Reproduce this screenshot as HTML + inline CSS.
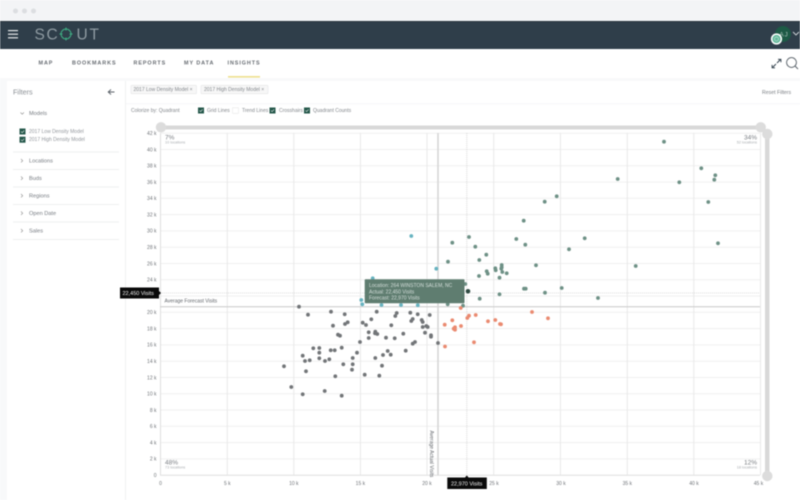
<!DOCTYPE html>
<html><head><meta charset="utf-8"><title>Scout</title>
<style>
html,body{margin:0;padding:0;width:800px;height:500px;overflow:hidden;background:#fff}
svg{display:block;filter:blur(.55px)}
text{font-family:"Liberation Sans",sans-serif}
</style></head><body>
<svg width="800" height="500" viewBox="0 0 800 500" xmlns="http://www.w3.org/2000/svg">
<rect width="800" height="500" fill="#fff"/>
<rect width="800" height="21" fill="#f3f4f6"/>
<circle cx="15.5" cy="11" r="2.5" fill="#dcdee1"/><circle cx="24.5" cy="11" r="2.5" fill="#dcdee1"/><circle cx="33.5" cy="11" r="2.5" fill="#dcdee1"/>
<rect y="21" width="800" height="28" fill="#2f3e4a"/>
<rect y="21" width="800" height="1" fill="#28343e"/>
<g fill="#e6e9ea"><rect x="8" y="30" width="10" height="1.2"/><rect x="8" y="33.600" width="10" height="1.2"/><rect x="8" y="37.200" width="10" height="1.2"/></g>
<g fill="#8f9ba2" font-size="15.5"><text x="34.5" y="39.5">S</text><text x="46.5" y="39.5">C</text><text x="76.5" y="39.5">U</text><text x="89.5" y="39.5">T</text></g>
<circle cx="66" cy="34" r="5" fill="none" stroke="#3fae84" stroke-width="1"/>
<path d="M66 27.5v3M66 37.5v3M59.5 34h3M69.5 34h3" stroke="#3fae84" stroke-width="1"/>
<circle cx="783" cy="34" r="8" fill="#1d5a46"/>
<text x="784" y="36.5" font-size="6.500" fill="#a9c2b8" text-anchor="middle" letter-spacing=".8">AJ</text>
<path d="M793 32l3 3 3-3" fill="none" stroke="#d0d6d9" stroke-width=".9"/>
<circle cx="776.5" cy="39" r="5.6" fill="#fff"/><circle cx="776.5" cy="39" r="4.1" fill="#62b89a"/><circle cx="776.5" cy="39" r="2" fill="none" stroke="#bfe3d6" stroke-width=".7"/>
<g font-size="5.4" font-weight="bold" fill="#666b71" letter-spacing=".95"><text x="38.5" y="64.3">MAP</text><text x="72" y="64.3">BOOKMARKS</text><text x="133.5" y="64.3">REPORTS</text><text x="184" y="64.3">MY DATA</text><text x="227.5" y="64.3">INSIGHTS</text></g>
<rect x="228" y="76" width="32" height="1.6" fill="#eee08e"/>
<path d="M777 63l3.5-3.5M778 59.3h2.9v2.9M776 64l-3.5 3.5M775 67.8h-2.9v-2.9" fill="none" stroke="#2f3e4a" stroke-width=".9"/>
<circle cx="791.5" cy="62.5" r="4.9" fill="none" stroke="#555e66" stroke-width=".9"/><path d="M795 66l3 3" stroke="#555e66" stroke-width=".9"/>
<rect y="78" width="800" height="422" fill="#f8f9fa"/>
<rect x="7" y="81" width="118" height="419" fill="#fff"/>
<rect x="126" y="81" width="674" height="22" fill="#fff"/>
<rect x="126" y="104.5" width="674" height="395.5" fill="#fff"/>
<text x="13" y="94.5" font-size="7.2" fill="#8a8f94">Filters</text>
<path d="M114.500 92H108.500M111 89.500l-2.800 2.500 2.800 2.500" fill="none" stroke="#5a6168" stroke-width=".9"/>
<path d="M20.500 112.500l1.700 1.700 1.700-1.700" fill="none" stroke="#888" stroke-width=".6"/>
<g font-size="5.6" fill="#777c82"><text x="29" y="115">Models</text><text x="29" y="162.500">Locations</text><text x="29" y="180">Buds</text><text x="29" y="197.500">Regions</text><text x="29" y="215">Open Date</text><text x="29" y="232.500">Sales</text></g>
<g fill="none" stroke="#888" stroke-width=".6"><path d="M21 159l1.700 1.700-1.700 1.700M21 176.500l1.700 1.700-1.700 1.700M21 194l1.700 1.700-1.700 1.700M21 211.500l1.700 1.700-1.700 1.700M21 229l1.700 1.700-1.700 1.700"/></g>
<g fill="#24574a"><rect x="19.500" y="128.500" width="6" height="6"/><rect x="19.500" y="136.700" width="6" height="6"/></g>
<path d="M21 131.500l1.200 1.200 2-2.200M21 139.700l1.200 1.200 2-2.200" fill="none" stroke="#dfe9e5" stroke-width=".6"/>
<g font-size="5" fill="#94989d"><text x="29" y="133">2017 Low Density Model</text><text x="29" y="141.200">2017 High Density Model</text></g>
<g fill="#eeeff0"><rect x="13" y="151.500" width="106" height="1"/><rect x="13" y="169" width="106" height="1"/><rect x="13" y="186.500" width="106" height="1"/><rect x="13" y="204" width="106" height="1"/><rect x="13" y="221.500" width="106" height="1"/><rect x="13" y="239" width="106" height="1"/></g>
<rect x="125" y="81" width="1" height="419" fill="#f0f1f2"/>
<g fill="#f7f7f7" stroke="#e4e5e6" stroke-width=".6"><rect x="131" y="85.300" width="65.500" height="8.400" rx="1"/><rect x="201" y="85.300" width="67" height="8.400" rx="1"/></g>
<g font-size="5" fill="#83878c"><text x="133.500" y="91.200">2017 Low Density Model  ×</text><text x="204" y="91.200">2017 High Density Model  ×</text><text x="131" y="112">Colorize by: Quadrant</text><text x="207" y="112">Grid Lines</text><text x="242" y="112">Trend Lines</text><text x="279" y="112">Crosshairs</text><text x="313" y="112">Quadrant Counts</text></g>
<text x="762" y="93.800" font-size="5.200" fill="#7d8186">Reset Filters</text>
<g fill="#24574a"><rect x="198" y="107.500" width="6" height="6"/><rect x="269.500" y="107.500" width="6" height="6"/><rect x="304" y="107.500" width="6" height="6"/></g>
<rect x="232.500" y="107.800" width="6" height="5.600" fill="#fff" stroke="#e3e3e3" stroke-width=".5"/>
<path d="M199.500 110.500l1.100 1.100 2-2.100M271 110.500l1.100 1.100 2-2.100M305.500 110.500l1.100 1.100 2-2.100" fill="none" stroke="#dfe9e5" stroke-width=".6"/>

<rect x="160" y="125.500" width="600" height="4" fill="#d8d8d8"/>
<rect x="765" y="134" width="4.500" height="342" fill="#d8d8d8"/>
<circle cx="161" cy="127.300" r="5.200" fill="#dcdcdc"/><circle cx="760.700" cy="127.300" r="5.200" fill="#dcdcdc"/><circle cx="767.300" cy="134" r="5.200" fill="#dcdcdc"/><circle cx="767.300" cy="476" r="5.200" fill="#dcdcdc"/>

<g stroke="#efefef" stroke-width="1"><path d="M160 133.200H760M160 149.500H760M160 165.800H760M160 182.100H760M160 198.300H760M160 214.600H760M160 230.900H760M160 247.200H760M160 263.500H760M160 279.800H760M160 296H760M160 312.300H760M160 328.600H760M160 344.900H760M160 361.200H760M160 377.500H760M160 393.700H760M160 410H760M160 426.300H760M160 442.600H760M160 458.900H760"/></g>
<g stroke="#e9e9e9" stroke-width="1"><path d="M227.300 133V475M293.800 133V475M360.400 133V475M427 133V475M493.700 133V475M560.400 133V475M627.300 133V475M693.800 133V475M760.500 133V475"/></g>
<path d="M160.500 133V475M160 475.300H760" stroke="#dfdfdf" stroke-width="1"/>
<path d="M160 306.700H760" stroke="#c9c9c9" stroke-width="1"/>
<path d="M438 133V475" stroke="#d5d5d5" stroke-width="1.500"/>
<path d="M160 293H760M466.800 133V477" stroke="#cfcfcf" stroke-width=".8" stroke-dasharray="1 1"/>

<g font-size="5" fill="#6f7378" text-anchor="end">
<text x="156.500" y="135">42 k</text><text x="156.500" y="151.300">40 k</text><text x="156.500" y="167.600">38 k</text><text x="156.500" y="183.900">36 k</text><text x="156.500" y="200.100">34 k</text><text x="156.500" y="216.400">32 k</text><text x="156.500" y="232.700">30 k</text><text x="156.500" y="249">28 k</text><text x="156.500" y="265.300">26 k</text><text x="156.500" y="281.600">24 k</text><text x="156.500" y="314.100">20 k</text><text x="156.500" y="330.400">18 k</text><text x="156.500" y="346.700">16 k</text><text x="156.500" y="363">14 k</text><text x="156.500" y="379.300">12 k</text><text x="156.500" y="395.500">10 k</text><text x="156.500" y="411.800">8 k</text><text x="156.500" y="428.100">6 k</text><text x="156.500" y="444.400">4 k</text><text x="156.500" y="460.700">2 k</text><text x="156.500" y="477">0</text>
</g>
<g font-size="5" fill="#6f7378" text-anchor="middle">
<text x="160.500" y="484.800">0</text><text x="227.300" y="484.800">5 k</text><text x="293.800" y="484.800">10 k</text><text x="360.400" y="484.800">15 k</text><text x="427" y="484.800">20 k</text><text x="494" y="484.800">25 k</text><text x="561" y="484.800">30 k</text><text x="627.300" y="484.800">35 k</text><text x="694" y="484.800">40 k</text><text x="758.500" y="484.800">45 k</text>
</g>
<g fill="#7b7f84"><text x="165" y="139.500" font-size="6.500">7%</text><text x="165" y="464.500" font-size="6.500">48%</text><text x="757" y="139.500" font-size="6.500" text-anchor="end">34%</text><text x="757" y="464.500" font-size="6.500" text-anchor="end">12%</text></g>
<g fill="#a9adb1" font-size="3.800"><text x="165" y="143.500">10 locations</text><text x="165" y="468.500">73 locations</text><text x="757" y="143.500" text-anchor="end">52 locations</text><text x="757" y="468.500" text-anchor="end">18 locations</text></g>
<text x="164.500" y="302.300" font-size="5" fill="#63676c">Average Forecast Visits</text>
<text transform="translate(430,430.500) rotate(90)" font-size="5" fill="#63676c">Average Actual Visits</text>

<g fill="#6e9186">
<circle cx="664" cy="141.700" r="1.900"/><circle cx="701.300" cy="168.300" r="1.900"/><circle cx="715.300" cy="175.300" r="1.900"/><circle cx="714.300" cy="179.700" r="1.900"/><circle cx="679.300" cy="182.300" r="1.900"/><circle cx="617.700" cy="179" r="1.900"/><circle cx="708.300" cy="202" r="1.900"/><circle cx="556.700" cy="196.300" r="1.900"/><circle cx="544.700" cy="201.700" r="1.900"/><circle cx="523.700" cy="220.700" r="1.900"/><circle cx="584.700" cy="238.300" r="1.900"/><circle cx="516.300" cy="239" r="1.900"/><circle cx="525.300" cy="244.700" r="1.900"/><circle cx="569" cy="249.300" r="1.900"/><circle cx="718" cy="243.300" r="1.900"/><circle cx="536" cy="265.300" r="1.900"/><circle cx="635.700" cy="266" r="1.900"/><circle cx="501.700" cy="265" r="1.900"/><circle cx="501.700" cy="267.300" r="1.900"/><circle cx="502.300" cy="272" r="1.900"/><circle cx="506.700" cy="273.300" r="1.900"/><circle cx="499.500" cy="277.700" r="1.900"/><circle cx="524" cy="288.700" r="1.900"/><circle cx="525.700" cy="288.700" r="1.900"/><circle cx="561.700" cy="288" r="1.900"/><circle cx="545" cy="292.700" r="1.900"/><circle cx="598" cy="298" r="1.900"/><circle cx="499.500" cy="294.300" r="1.900"/>
<circle cx="452.300" cy="242.700" r="1.900"/><circle cx="469" cy="237" r="1.900"/><circle cx="475.300" cy="246.700" r="1.900"/><circle cx="486.300" cy="254.700" r="1.900"/><circle cx="448" cy="261.700" r="1.900"/><circle cx="479.300" cy="260" r="1.900"/><circle cx="495.300" cy="268.300" r="1.900"/><circle cx="495.700" cy="270.300" r="1.900"/><circle cx="501.300" cy="268.700" r="1.900"/><circle cx="486.700" cy="271.300" r="1.900"/><circle cx="487.700" cy="273.700" r="1.900"/><circle cx="479" cy="276" r="1.900"/><circle cx="465.300" cy="284" r="1.900"/><circle cx="479.700" cy="298.700" r="1.900"/><circle cx="447.700" cy="304.300" r="1.900"/><circle cx="463" cy="305.700" r="1.900"/>
</g>
<circle cx="468" cy="291.300" r="2.300" fill="#2f4a42"/>
<g fill="#67b3c0">
<circle cx="411.300" cy="236" r="1.900"/><circle cx="436.300" cy="268.700" r="1.900"/><circle cx="372.700" cy="278.300" r="1.900"/><circle cx="361.300" cy="300" r="1.900"/><circle cx="362.300" cy="304.300" r="1.900"/><circle cx="381.500" cy="305" r="1.900"/><circle cx="401" cy="305" r="1.900"/><circle cx="417.800" cy="305.200" r="1.900"/>
</g>
<g fill="#ea8a70">
<circle cx="532" cy="312" r="1.900"/><circle cx="548" cy="318.300" r="1.900"/><circle cx="460.700" cy="308" r="1.900"/><circle cx="475.700" cy="315" r="1.900"/><circle cx="469" cy="315.700" r="1.900"/><circle cx="467.300" cy="318" r="1.900"/><circle cx="452.300" cy="320.300" r="1.900"/><circle cx="488" cy="321.300" r="1.900"/><circle cx="495.300" cy="320" r="1.900"/><circle cx="500" cy="324" r="1.900"/><circle cx="501" cy="324.300" r="1.900"/><circle cx="444.700" cy="324.700" r="1.900"/><circle cx="461" cy="326" r="1.900"/><circle cx="455" cy="327.300" r="1.900"/><circle cx="453.700" cy="328.700" r="1.900"/><circle cx="455" cy="329.700" r="1.900"/><circle cx="474" cy="342.300" r="1.900"/><circle cx="445" cy="346.500" r="1.900"/>
</g>
<g fill="#727578">
<circle cx="299" cy="306.700" r="1.900"/><circle cx="308" cy="314.700" r="1.900"/><circle cx="331" cy="311.700" r="1.900"/><circle cx="344.700" cy="314.300" r="1.900"/><circle cx="376.700" cy="311.700" r="1.900"/><circle cx="371.300" cy="319.300" r="1.900"/><circle cx="396.700" cy="313" r="1.900"/><circle cx="395.300" cy="316" r="1.900"/><circle cx="410.300" cy="312.700" r="1.900"/><circle cx="417.700" cy="314.300" r="1.900"/><circle cx="429.700" cy="315" r="1.900"/><circle cx="412.700" cy="319" r="1.900"/><circle cx="411.300" cy="321" r="1.900"/><circle cx="421.700" cy="320" r="1.900"/><circle cx="422.700" cy="322" r="1.900"/><circle cx="333" cy="325.700" r="1.900"/><circle cx="347.700" cy="322.300" r="1.900"/><circle cx="345" cy="324" r="1.900"/><circle cx="362.700" cy="322.700" r="1.900"/><circle cx="366" cy="325" r="1.900"/><circle cx="391.300" cy="325.300" r="1.900"/><circle cx="422.700" cy="327" r="1.900"/><circle cx="426.300" cy="326" r="1.900"/><circle cx="427.700" cy="327" r="1.900"/><circle cx="368.700" cy="332.300" r="1.900"/><circle cx="375.300" cy="331.700" r="1.900"/><circle cx="375" cy="333.300" r="1.900"/><circle cx="377.300" cy="334" r="1.900"/><circle cx="338" cy="334.700" r="1.900"/><circle cx="340" cy="335.700" r="1.900"/><circle cx="425" cy="332.700" r="1.900"/><circle cx="403.300" cy="333.700" r="1.900"/><circle cx="431" cy="335.300" r="1.900"/><circle cx="431" cy="336.700" r="1.900"/><circle cx="368.700" cy="338" r="1.900"/><circle cx="386" cy="337.700" r="1.900"/><circle cx="394.700" cy="338.300" r="1.900"/><circle cx="360" cy="342" r="1.900"/><circle cx="415" cy="342" r="1.900"/><circle cx="412.700" cy="343.700" r="1.900"/><circle cx="438" cy="343" r="1.900"/><circle cx="313.300" cy="348.300" r="1.900"/><circle cx="319.300" cy="348" r="1.900"/><circle cx="341.700" cy="347.700" r="1.900"/><circle cx="330.700" cy="350.300" r="1.900"/><circle cx="334.700" cy="350.300" r="1.900"/><circle cx="319.300" cy="352.700" r="1.900"/><circle cx="357" cy="352.700" r="1.900"/><circle cx="387.700" cy="351" r="1.900"/><circle cx="405.700" cy="350.700" r="1.900"/><circle cx="302.700" cy="355.700" r="1.900"/><circle cx="383" cy="355" r="1.900"/><circle cx="390.700" cy="354.700" r="1.900"/><circle cx="352.700" cy="358" r="1.900"/><circle cx="375.300" cy="358" r="1.900"/><circle cx="319.300" cy="358.300" r="1.900"/><circle cx="329.300" cy="359.300" r="1.900"/><circle cx="325" cy="361" r="1.900"/><circle cx="305" cy="361" r="1.900"/><circle cx="309.700" cy="360.300" r="1.900"/><circle cx="352.700" cy="364.300" r="1.900"/><circle cx="343.300" cy="364.300" r="1.900"/><circle cx="382" cy="365.700" r="1.900"/><circle cx="284" cy="366.300" r="1.900"/><circle cx="352" cy="369.700" r="1.900"/><circle cx="306" cy="371.300" r="1.900"/><circle cx="364.700" cy="374.700" r="1.900"/><circle cx="379.300" cy="375.700" r="1.900"/><circle cx="335.300" cy="376.300" r="1.900"/><circle cx="291.300" cy="387" r="1.900"/><circle cx="324.700" cy="391" r="1.900"/><circle cx="302.700" cy="394.300" r="1.900"/><circle cx="341.700" cy="395.700" r="1.900"/>
</g>

<rect x="364.700" y="279.300" width="99.800" height="23.900" rx=".8" fill="#5f7d70"/>
<g font-size="5" fill="#d5dfdb"><text x="369" y="287.200">Location: 264 WINSTON SALEM, NC</text><text x="369" y="293.300">Actual: 22,450 Visits</text><text x="369" y="299.400">Forecast: 22,970 Visits</text></g>

<rect x="120" y="287.500" width="39" height="11" fill="#0a0a0a"/><path d="M159 291l2 2-2 2z" fill="#0a0a0a"/>
<text x="122.500" y="295" font-size="5.500" fill="#f2f2f2">22,450 Visits</text>
<rect x="447.300" y="477.500" width="39.500" height="11.500" fill="#0a0a0a"/><path d="M465 477.500l1.800-2 1.800 2z" fill="#0a0a0a"/>
<text x="451" y="485.500" font-size="5.500" fill="#f2f2f2">22,970 Visits</text>
</svg>
</body></html>
